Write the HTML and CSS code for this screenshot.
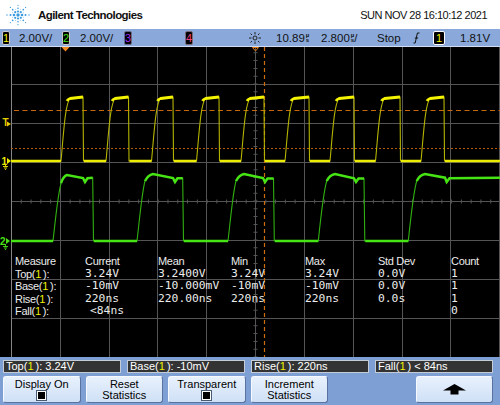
FILE: index.html
```html
<!DOCTYPE html>
<html>
<head>
<meta charset="utf-8">
<link rel="stylesheet" href="styles.css">
</head>
<body>
<div class="screen">
  <header class="topbar">
    <svg class="logo" viewBox="0 0 26 26" width="26" height="26">
      <g fill="#3d9be0">
        <circle cx="13" cy="13" r="1.7"/>
        <circle cx="17" cy="13" r="1.3"/><circle cx="20.5" cy="13" r="1"/><circle cx="24" cy="13" r="0.7"/>
        <circle cx="9" cy="13" r="1.3"/><circle cx="5.5" cy="13" r="1"/><circle cx="2" cy="13" r="0.7"/>
        <circle cx="13" cy="9.5" r="1.1"/><circle cx="13" cy="6.3" r="0.8"/><circle cx="13" cy="3.3" r="0.6"/>
        <circle cx="13" cy="16.5" r="1.1"/><circle cx="13" cy="19.7" r="0.8"/><circle cx="13" cy="22.7" r="0.6"/>
        <circle cx="15.8" cy="10.2" r="1.1"/><circle cx="18.3" cy="7.7" r="0.85"/><circle cx="20.6" cy="5.4" r="0.6"/>
        <circle cx="10.2" cy="10.2" r="1.1"/><circle cx="7.7" cy="7.7" r="0.85"/><circle cx="5.4" cy="5.4" r="0.6"/>
        <circle cx="15.8" cy="15.8" r="1.1"/><circle cx="18.3" cy="18.3" r="0.85"/><circle cx="20.6" cy="20.6" r="0.6"/>
        <circle cx="10.2" cy="15.8" r="1.1"/><circle cx="7.7" cy="18.3" r="0.85"/><circle cx="5.4" cy="20.6" r="0.6"/>
      </g>
      <g fill="#8cc6ee">
        <circle cx="18.5" cy="10.7" r="0.5"/><circle cx="7.5" cy="10.7" r="0.5"/>
        <circle cx="18.5" cy="15.3" r="0.5"/><circle cx="7.5" cy="15.3" r="0.5"/>
        <circle cx="15.3" cy="7.5" r="0.5"/><circle cx="10.7" cy="7.5" r="0.5"/>
        <circle cx="15.3" cy="18.5" r="0.5"/><circle cx="10.7" cy="18.5" r="0.5"/>
      </g>
    </svg>
    <span class="brand">Agilent Technologies</span>
    <span class="date">SUN NOV 28 16:10:12 2021</span>
  </header>

  <div class="status">
    <span><span class="badge ch1">1</span></span>
    <span>2.00V/</span>
    <span><span class="badge ch2">2</span></span>
    <span>2.00V/</span>
    <span><span class="badge ch3">3</span></span>
    <span><span class="badge ch4">4</span></span>
    <span>
      <svg class="sun" viewBox="0 0 12 12" width="12" height="12">
        <circle cx="6" cy="6" r="2" fill="none" stroke="#222" stroke-width="1"/>
        <g stroke="#222" stroke-width="1">
          <line x1="6" y1="0" x2="6" y2="2.5"/><line x1="6" y1="9.5" x2="6" y2="12"/>
          <line x1="0" y1="6" x2="2.5" y2="6"/><line x1="9.5" y1="6" x2="12" y2="6"/>
          <line x1="1.5" y1="1.5" x2="3" y2="3"/><line x1="9" y1="9" x2="10.5" y2="10.5"/>
          <line x1="1.5" y1="10.5" x2="3" y2="9"/><line x1="9" y1="3" x2="10.5" y2="1.5"/>
        </g>
      </svg>
    </span>
    <span>10.89<span class="unit"><span>µ</span><span>s</span></span></span>
    <span>2.800<span class="unit"><span>µ</span><span>s</span></span>/</span>
    <span>Stop</span>
    <span>
      <svg class="slope" viewBox="0 0 7 12" width="7" height="12">
        <path d="M0.5 11 H2.2 L4.4 1 H6.5 M1.8 6 H5.2" fill="none" stroke="#111" stroke-width="1"/>
      </svg>
    </span>
    <span><span class="badge trig">1</span></span>
    <span>1.81V</span>
  </div>

  <div class="scope">
    <svg class="graticule" viewBox="0 47 500 310" width="500" height="310">
      <g stroke="#555" stroke-width="1">
        <line x1="60.5" y1="47" x2="60.5" y2="357"/>
        <line x1="109.5" y1="47" x2="109.5" y2="357"/>
        <line x1="157.5" y1="47" x2="157.5" y2="357"/>
        <line x1="206.5" y1="47" x2="206.5" y2="357"/>
        <line x1="255.5" y1="47" x2="255.5" y2="357"/>
        <line x1="304.5" y1="47" x2="304.5" y2="357"/>
        <line x1="353.5" y1="47" x2="353.5" y2="357"/>
        <line x1="402.5" y1="47" x2="402.5" y2="357"/>
        <line x1="450.5" y1="47" x2="450.5" y2="357"/>
        <line x1="499.5" y1="47" x2="499.5" y2="357"/>
        <line x1="11" y1="84.5" x2="500" y2="84.5"/>
        <line x1="11" y1="123.5" x2="500" y2="123.5"/>
        <line x1="11" y1="162.5" x2="500" y2="162.5"/>
        <line x1="11" y1="201.5" x2="500" y2="201.5"/>
        <line x1="11" y1="240.5" x2="500" y2="240.5"/>
        <line x1="11" y1="279.5" x2="500" y2="279.5"/>
        <line x1="11" y1="318.5" x2="500" y2="318.5"/>
        <line x1="11" y1="201.5" x2="500" y2="201.5" stroke-width="4" stroke-dasharray="1 8.78"/>
        <line x1="255.5" y1="44.5" x2="255.5" y2="357" stroke-width="4" stroke-dasharray="1 6.8"/>
      </g>
      <line x1="11.5" y1="47" x2="11.5" y2="357" stroke="#858585" stroke-width="1"/>

      <!-- reference markers -->
      <line x1="14" y1="110.5" x2="500" y2="110.5" stroke="#c8660c" stroke-width="1.2" stroke-dasharray="5 3.5"/>
      <line x1="11" y1="148.5" x2="500" y2="148.5" stroke="#b45a0c" stroke-width="1.2" stroke-dasharray="2 2"/>
      <line x1="264.5" y1="47" x2="264.5" y2="357" stroke="#d06c10" stroke-width="1.2" stroke-dasharray="4 3"/>
      <polygon points="61.5,47 69.5,47 65.5,51.5" fill="#f08a20"/>
      <polygon points="252.5,47.5 258.5,47.5 255.5,51" fill="none" stroke="#e07a18" stroke-width="1"/>

      <!-- channel 1 trace -->
      <path fill="none" stroke="#b4b400" stroke-width="1.1"
        d="M11 161 H61 C63.5 135 65 104 70 98.5 L83 97 L83.5 161
           H106 C108.5 135 110 104 115 98.5 L128.5 97 L129 161
           H151.5 C154 135 155.5 104 160.5 98.5 L173 97 L173.5 161
           H196.5 C199 135 200.5 104 205.5 98.5 L219 97 L219.5 161
           H241 C243.5 135 245 104 250 98.5 L264 97 L264.5 161
           H285 C287.5 135 289 104 294 98.5 L309 97 L309.5 161
           H330 C332.5 135 334 104 339 98.5 L354 97 L354.5 161
           H375.5 C378 135 379.5 104 384.5 98.5 L400 97 L400.5 161
           H421 C423.5 135 425 104 430 98.5 L444 97 L444.5 161 H500"/>
      <path fill="none" stroke="#ecec00" stroke-width="2.4"
        d="M11 161 H61 M84 161 H106 M129.5 161 H151.5 M174 161 H196.5 M220 161 H241 M265 161 H285 M310 161 H330 M355 161 H375.5 M401 161 H421 M445 161 H500"/>
      <path fill="none" stroke="#f4f400" stroke-width="2.8"
        d="M67 101 Q68 99 70 98.5 L83 97
           M112 101 Q113 99 115 98.5 L128.5 97
           M157.5 101 Q158.5 99 160.5 98.5 L173 97
           M202.5 101 Q203.5 99 205.5 98.5 L219 97
           M247 101 Q248 99 250 98.5 L264 97
           M291 101 Q292 99 294 98.5 L309 97
           M336 101 Q337 99 339 98.5 L354 97
           M381.5 101 Q382.5 99 384.5 98.5 L400 97
           M427 101 Q428 99 430 98.5 L444 97"/>

      <!-- channel 2 trace -->
      <path fill="none" stroke="#30b010" stroke-width="1.1"
        d="M11 241 H53 C56 215 58 192 61.5 182 Q63.5 176 67 175 L83 178 L85 182 L87.5 178.3 L92.7 177.8 L93.5 241
           H137 C140 215 142 192 145 181 Q148 175 153 174 L173 178 L175 182 L177.5 178.3 L182.7 178.3 L183.5 241
           H228 C231 215 233 192 236 181 Q239 175 244 174 L263 178 L265 182 L267.5 178.5 L273.5 178.5 L274.3 241
           H318.3 C321 215 323.5 192 326.7 181 Q329.5 175 335 174 L354 178.3 L356 182 L358.5 178.5 L364 178.5 L364.8 241
           H408.3 C411 215 413.5 192 416.7 181 Q419.5 175 425 174 L445 177.7 L446.7 182 L449.5 178.3 L500 177.7"/>
      <path fill="none" stroke="#46e414" stroke-width="2.5"
        d="M11 241 H53 M94 241 H137 M184 241 H228 M275 241 H318.3 M365.3 241 H408.3
           M61 183 Q63.5 176 67 175 L83 178 L85 182 L87.5 178.3 L92.7 177.8
           M145 181 Q148 175 153 174 L173 178 L175 182 L177.5 178.3 L182.7 178.3
           M236 181 Q239 175 244 174 L263 178 L265 182 L267.5 178.5 L273.5 178.5
           M326.7 181 Q329.5 175 335 174 L354 178.3 L356 182 L358.5 178.5 L364 178.5
           M416.7 181 Q419.5 175 425 174 L445 177.7 L446.7 182 L449.5 178.3 L500 177.7"/>

      <!-- left markers -->
      <text x="2.5" y="126" class="mk" fill="#e6cf00">T</text>
      <polygon points="7,121.5 11,124 7,126.5" fill="#e6cf00"/>
      <text x="1.5" y="164.5" class="mk" fill="#ecec00">1</text>
      <polygon points="7,158 11,161 7,164" fill="#ecec00"/>
      <path d="M5.5 164 V166 M3 166.5 H8 M4 168 H7 M5 169.5 H6" stroke="#d8d800" stroke-width="1" fill="none"/>
      <text x="0" y="245" class="mk" fill="#46e414">2</text>
      <polygon points="6,238 10,241 6,244" fill="#46e414"/>
      <path d="M5.5 244 V246 M3 246.5 H8 M4 248 H7 M5 249.5 H6" stroke="#40d010" stroke-width="1" fill="none"/>
    </svg>

    <div class="meas">
      <div class="row head">
        <span>Measure</span><span>Current</span><span>Mean</span><span>Min</span><span>Max</span><span>Std Dev</span><span>Count</span>
      </div>
      <div class="row">
        <span class="lbl">Top(<b>1</b>):</span><span class="v">3.24V</span><span class="v">3.2400V</span><span class="v">3.24V</span><span class="v">3.24V</span><span class="v">0.0V</span><span class="v">1</span>
      </div>
      <div class="row">
        <span class="lbl">Base(<b>1</b>):</span><span class="v">-10mV</span><span class="v">-10.000mV</span><span class="v">-10mV</span><span class="v">-10mV</span><span class="v">0.0V</span><span class="v">1</span>
      </div>
      <div class="row">
        <span class="lbl">Rise(<b>1</b>):</span><span class="v">220ns</span><span class="v">220.00ns</span><span class="v">220ns</span><span class="v">220ns</span><span class="v">0.0s</span><span class="v">1</span>
      </div>
      <div class="row">
        <span class="lbl">Fall(<b>1</b>):</span><span class="v indent">&lt;84ns</span><span></span><span></span><span></span><span></span><span class="v">0</span>
      </div>
    </div>
  </div>

  <footer class="softkeys">
    <div class="readouts">
      <div class="readout">Top(<b>1</b>): 3.24V</div>
      <div class="readout">Base(<b>1</b>): -10mV</div>
      <div class="readout">Rise(<b>1</b>): 220ns</div>
      <div class="readout">Fall(<b>1</b>) &lt; 84ns</div>
    </div>
    <div class="keys">
      <div class="key"><span>Display On</span><span class="check"></span></div>
      <div class="key"><span>Reset</span><span>Statistics</span></div>
      <div class="key"><span>Transparent</span><span class="check"></span></div>
      <div class="key"><span>Increment</span><span>Statistics</span></div>
      <div class="key empty"></div>
      <div class="key">
        <svg class="arrow" viewBox="0 0 23 11" width="23" height="11">
          <polygon points="11.5,0 23,6.5 15.5,6.5 15.5,10.5 7.5,10.5 7.5,6.5 0,6.5" fill="#000"/>
        </svg>
      </div>
    </div>
  </footer>
</div>
</body>
</html>
```

FILE: styles.css
```css
* { box-sizing: border-box; }

body {
  margin: 0;
  background: #000;
}

.screen {
  width: 500px;
  height: 405px;
  overflow: hidden;
  display: flex;
  flex-direction: column;
  font-family: "Liberation Sans", Arial, sans-serif;
  color: #000;
}

/* header */
.topbar {
  height: 29px;
  flex: none;
  background: #fff;
  display: flex;
  align-items: center;
  padding: 0 13px 0 5px;
}

.logo { display: block; flex: none; }

.brand {
  margin-left: 7px;
  font-weight: bold;
  font-size: 11.5px;
  letter-spacing: -0.55px;
  color: #111;
}

.date {
  margin-left: auto;
  font-size: 11px;
  letter-spacing: -0.5px;
  color: #111;
}

/* status line */
.status {
  height: 18px;
  flex: none;
  background: #8aa9da;
  border-bottom: 1px solid #cfdcf2;
  display: grid;
  grid-template-columns: 17px 43px 18px 44px 61px 64px 27px 45px 56px 36px 20px 27px 40px;
  padding-left: 2px;
  align-items: center;
  font-size: 11.5px;
  line-height: 14px;
  white-space: nowrap;
  color: #111;
}

.status > span {
  display: flex;
  align-items: center;
}

.badge {
  display: inline-block;
  width: 8px;
  height: 14px;
  background: #000;
  border: 1px solid #c8c8c8;
  border-radius: 2px;
  font-size: 11px;
  line-height: 12px;
  text-align: center;
}

.ch1 { color: #f0f000; }
.ch2 { color: #40e010; }
.ch3 { color: #a030f0; border-color: #6a6a8a; }
.ch4 { color: #f0407e; border-color: #7a6a7a; }

.badge.trig {
  width: 12px;
  height: 14px;
  border-color: #fff;
  color: #f0f000;
}

.sun { display: block; }
.slope { display: block; }

.unit {
  display: inline-flex;
  flex-direction: column;
  font-size: 6px;
  line-height: 5px;
  margin-left: 1px;
  font-weight: bold;
}

/* scope display */
.scope {
  position: relative;
  height: 310px;
  flex: none;
  background: #000;
}

.graticule { display: block; }

.mk {
  font-family: "Liberation Sans", Arial, sans-serif;
  font-size: 10px;
  font-weight: bold;
}

.meas {
  position: absolute;
  left: 15px;
  top: 208px;
  color: #ececec;
}

.meas .row {
  display: grid;
  grid-template-columns: 70px 73px 73px 74px 73px 73px 40px;
  height: 12.5px;
  line-height: 12.5px;
  white-space: nowrap;
}

.meas .head span,
.meas .lbl {
  font-family: "Liberation Sans", Arial, sans-serif;
  font-size: 11px;
  letter-spacing: -0.3px;
}

.meas b,
.readout b {
  font-weight: normal;
  color: #f0f000;
  margin-right: 2px;
}

.meas .v {
  font-family: "DejaVu Sans Mono", "Liberation Mono", monospace;
  font-size: 11.3px;
}

.meas .indent { padding-left: 5px; }

/* soft keys */
.softkeys {
  height: 48px;
  flex: none;
  background: #7e9fd4;
  padding: 3px 7px 2px 3px;
  display: flex;
  flex-direction: column;
  gap: 3px;
}

.readouts {
  display: grid;
  grid-template-columns: repeat(4, 1fr);
  gap: 6px;
  height: 13px;
}

.readout {
  background: #333;
  border: 1px solid #c4ccd8;
  color: #fff;
  font-size: 11px;
  line-height: 11px;
  padding-left: 2px;
  white-space: nowrap;
  overflow: hidden;
}

.keys {
  display: grid;
  grid-template-columns: repeat(6, 1fr);
  gap: 5px;
  height: 27px;
}

.key {
  background: linear-gradient(#e8f1fd, #cfe0f6);
  border: 1px solid;
  border-color: #f6faff #5a72a0 #5a72a0 #f6faff;
  border-radius: 3px;
  display: flex;
  flex-direction: column;
  align-items: center;
  justify-content: center;
  font-size: 11px;
  line-height: 11px;
  color: #000;
  white-space: nowrap;
}

.key.empty { visibility: hidden; }

.check {
  display: block;
  width: 9px;
  height: 9px;
  margin-top: 1px;
  background: #000;
  border: 1px solid #fff;
  outline: 1px solid #4a5a70;
}

.arrow { display: block; }
```
